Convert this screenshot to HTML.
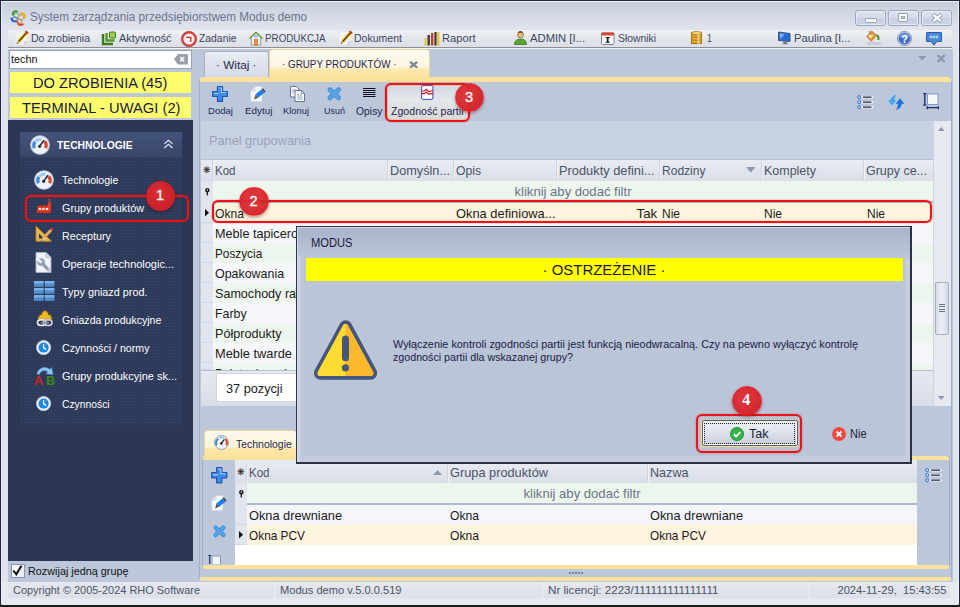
<!DOCTYPE html>
<html lang="pl"><head><meta charset="utf-8"><title>System zarządzania przedsiębiorstwem Modus demo</title>
<style>
html,body{margin:0;padding:0;}
body{width:960px;height:607px;overflow:hidden;position:relative;font-family:"Liberation Sans", sans-serif;background:#cdd4e2;}
div,span,svg{position:absolute;box-sizing:border-box;}
.t{white-space:nowrap;}
svg{overflow:visible;}
</style></head>
<body>
<div style="left:0px;top:0px;width:960px;height:607px;background:linear-gradient(#c6cddc 0,#dfe3ec 28px,#dfe3ec 100%);"></div>
<div style="left:0px;top:0px;width:960px;height:1px;background:#1f2942;"></div>
<div style="left:0px;top:1px;width:960px;height:1px;background:#eef1f6;"></div>
<div style="left:0px;top:0px;width:1px;height:607px;background:#1f2942;"></div>
<div style="left:1px;top:604px;width:958px;height:1px;background:#8a90a0;"></div>
<div style="left:1px;top:1px;width:1px;height:603px;background:#e8ecf3;"></div>
<div style="left:959px;top:0px;width:1px;height:607px;background:#1f2942;"></div>
<div style="left:958px;top:1px;width:1px;height:603px;background:#eef1f6;"></div>
<div style="left:0px;top:605px;width:960px;height:2px;background:#1c1c1c;"></div>
<svg style="left:10px;top:10px;" width="17" height="17" viewBox="0 0 17 17">
<path d="M7 1.5c-2.5-.8-4.5 1-4.2 3.2" fill="none" stroke="#2f9a2f" stroke-width="2" stroke-linecap="round"/>
<path d="M11 3.5c2.6-.4 4.5 1.5 3.8 4" fill="none" stroke="#e8b010" stroke-width="2" stroke-linecap="round"/>
<path d="M1.5 8.5c.3 2.6 2.8 3.6 4.8 2.4" fill="none" stroke="#1f4fc0" stroke-width="2" stroke-linecap="round"/>
<path d="M7.5 12c.5 3 3.5 3.8 5.3 2.2" fill="none" stroke="#d84a18" stroke-width="2" stroke-linecap="round"/>
<circle cx="6.5" cy="5.5" r="2.6" fill="none" stroke="#6aa06a" stroke-width="1"/>
<circle cx="11" cy="7.5" r="2.6" fill="none" stroke="#c9a25a" stroke-width="1"/>
<circle cx="9.2" cy="11.5" r="2.6" fill="none" stroke="#c97a5a" stroke-width="1"/>
<circle cx="5" cy="9" r="2.2" fill="none" stroke="#5a80b8" stroke-width="1"/>
</svg>
<span id="t0" class="t" style="top:8.6px;font-size:12px;line-height:16px;color:#69748e;left:29.8px;transform-origin:0 50%;transform:scaleX(0.9749);">System zarządzania przedsiębiorstwem Modus demo</span>
<div style="left:855px;top:10px;width:30.5px;height:16px;border:1px solid #9ba7c0;border-radius:3px;background:linear-gradient(#dde3ee,#d3dbe9 50%,#c6d0e2 52%,#ccd5e5);box-shadow:inset 0 0 0 1px rgba(255,255,255,.5);"><div style="left:9px;top:7px;width:11.500px;height:4.500px;background:#fff;border:1px solid #98a2b6;border-radius:1.500px;"></div></div>
<div style="left:888.3px;top:10px;width:30.5px;height:16px;border:1px solid #9ba7c0;border-radius:3px;background:linear-gradient(#dde3ee,#d3dbe9 50%,#c6d0e2 52%,#ccd5e5);box-shadow:inset 0 0 0 1px rgba(255,255,255,.5);"><div style="left:9px;top:2px;width:10px;height:9px;background:#fff;border:1px solid #98a2b6;border-radius:1px;"></div><div style="left:12px;top:5px;width:4px;height:3px;background:#c5ccdb;border:1px solid #98a2b6;"></div></div>
<div style="left:921.3px;top:10px;width:30.5px;height:16px;border:1px solid #9ba7c0;border-radius:3px;background:linear-gradient(#dde3ee,#d3dbe9 50%,#c6d0e2 52%,#ccd5e5);box-shadow:inset 0 0 0 1px rgba(255,255,255,.5);"><svg style="left:8.500px;top:1.800px" width="12" height="10" viewBox="0 0 12 10"><path d="M1.800 1.500l8.600 7M10.400 1.500l-8.600 7" stroke="#8e99b0" stroke-width="3.800"/><path d="M2.300 1.900l7.600 6.200M9.900 1.900l-7.600 6.200" stroke="#fff" stroke-width="2.300"/></svg></div>
<div style="left:8px;top:30px;width:944px;height:17px;background:linear-gradient(#eceef3,#dfe2ea);"></div>
<div style="left:8px;top:30px;width:86px;height:17px;background:linear-gradient(#f0f1f5,#e1e4eb 60%,#dcdfe8);"></div>
<div style="left:95px;top:30px;width:82px;height:17px;background:linear-gradient(#f0f1f5,#e1e4eb 60%,#dcdfe8);"></div>
<div style="left:178px;top:30px;width:65px;height:17px;background:linear-gradient(#f0f1f5,#e1e4eb 60%,#dcdfe8);"></div>
<div style="left:244px;top:30px;width:87px;height:17px;background:linear-gradient(#f0f1f5,#e1e4eb 60%,#dcdfe8);"></div>
<div style="left:332px;top:30px;width:83px;height:17px;background:linear-gradient(#f0f1f5,#e1e4eb 60%,#dcdfe8);"></div>
<div style="left:416px;top:30px;width:90px;height:17px;background:linear-gradient(#f0f1f5,#e1e4eb 60%,#dcdfe8);"></div>
<div style="left:507px;top:30px;width:86px;height:17px;background:linear-gradient(#f0f1f5,#e1e4eb 60%,#dcdfe8);"></div>
<div style="left:594px;top:30px;width:88px;height:17px;background:linear-gradient(#f0f1f5,#e1e4eb 60%,#dcdfe8);"></div>
<div style="left:683px;top:30px;width:87px;height:17px;background:linear-gradient(#f0f1f5,#e1e4eb 60%,#dcdfe8);"></div>
<div style="left:771px;top:30px;width:88px;height:17px;background:linear-gradient(#f0f1f5,#e1e4eb 60%,#dcdfe8);"></div>
<div style="left:860px;top:30px;width:30px;height:17px;background:linear-gradient(#f0f1f5,#e1e4eb 60%,#dcdfe8);"></div>
<div style="left:891px;top:30px;width:29px;height:17px;background:linear-gradient(#f0f1f5,#e1e4eb 60%,#dcdfe8);"></div>
<div style="left:921px;top:30px;width:30px;height:17px;background:linear-gradient(#f0f1f5,#e1e4eb 60%,#dcdfe8);"></div>
<div style="left:8px;top:47px;width:944px;height:1px;background:#8e8e90;"></div>
<div style="left:8px;top:48px;width:944px;height:1px;background:#f4f5f8;"></div>
<svg style="left:14px;top:30px;" width="16" height="16" viewBox="0 0 16 16"><path d="M.8 1h13v10.500l-3.800 3.700h-9.200z" fill="#f2f3f5" stroke="#d3d6dd" stroke-width=".6"/><path d="M13.800 11.500h-3.800v3.700z" fill="#dadde4" stroke="#c2c6cf" stroke-width=".5"/><path d="M4.600 11.600l8-9" stroke="#f2c21a" stroke-width="3.500"/><path d="M4.600 11.600l8-9" stroke="#2a2618" stroke-width="1.100"/><path d="M12.300 2.950l1.100-1.250" stroke="#d8201c" stroke-width="3.500"/><path d="M3.300 10.400l2.600 2.300-3.300 1.200z" fill="#d9b36a"/><path d="M2.600 13.900l.4-1.300 1 .9z" fill="#2a2618"/></svg>
<span id="t1" class="t" style="top:31.4px;font-size:11px;line-height:15px;color:#3b4761;left:30.5px;transform-origin:0 50%;transform:scaleX(0.9552);">Do zrobienia</span>
<svg style="left:102px;top:31px;" width="14" height="15" viewBox="0 0 14 15"><path d="M1 3v10h10" fill="none" stroke="#3c7a1c" stroke-width="2.4"/><path d="M4.5 2v7.5h8" fill="none" stroke="#4f9a24" stroke-width="2.4"/><rect x="7.5" y="1" width="6" height="6" rx="1" fill="#9ad04a" stroke="#3c7a1c" stroke-width="1"/></svg>
<span id="t2" class="t" style="top:31.4px;font-size:11px;line-height:15px;color:#3b4761;left:118.5px;transform-origin:0 50%;transform:scaleX(0.9985);">Aktywność</span>
<svg style="left:180.5px;top:30.5px;" width="16" height="16" viewBox="0 0 16 16"><circle cx="8" cy="8" r="6.700" fill="#fbeeee" stroke="#d2433a" stroke-width="2.200"/><circle cx="8" cy="8" r="7.700" fill="none" stroke="#a83028" stroke-width=".5"/><path d="M5.200 6.300h4.600v4.600" fill="none" stroke="#c0352c" stroke-width="1.300"/></svg>
<span id="t3" class="t" style="top:31.4px;font-size:11px;line-height:15px;color:#3b4761;left:198.5px;transform-origin:0 50%;transform:scaleX(0.9430);">Zadanie</span>
<svg style="left:249px;top:30.5px;" width="14" height="15" viewBox="0 0 14 15"><path d="M2.400 7v7.200h9.200v-7.200" fill="#f6f5f0" stroke="#8a8f98" stroke-width=".9"/><path d="M.6 7.600l6.400-6.400 6.400 6.400" fill="#f6f5f0" stroke="#5f9a48" stroke-width="1.500" stroke-linejoin="round"/><rect x="5.300" y="8.500" width="3.400" height="5.600" fill="#e89a3c" stroke="#a8641c" stroke-width=".6"/><rect x="5.800" y="4.600" width="2.400" height="2" fill="#a8c8e8" stroke="#6a8aa8" stroke-width=".4"/></svg>
<span id="t4" class="t" style="top:31.4px;font-size:11px;line-height:15px;color:#3b4761;left:265px;transform-origin:0 50%;transform:scaleX(0.8918);">PRODUKCJA</span>
<svg style="left:337.5px;top:30px;" width="16" height="16" viewBox="0 0 16 16"><path d="M.8 1h13v10.500l-3.800 3.700h-9.200z" fill="#f2f3f5" stroke="#d3d6dd" stroke-width=".6"/><path d="M13.800 11.500h-3.800v3.700z" fill="#dadde4" stroke="#c2c6cf" stroke-width=".5"/><path d="M4.600 11.600l8-9" stroke="#f2c21a" stroke-width="3.500"/><path d="M4.600 11.600l8-9" stroke="#2a2618" stroke-width="1.100"/><path d="M12.300 2.950l1.100-1.250" stroke="#d8201c" stroke-width="3.500"/><path d="M3.300 10.400l2.600 2.300-3.300 1.200z" fill="#d9b36a"/><path d="M2.600 13.900l.4-1.300 1 .9z" fill="#2a2618"/></svg>
<span id="t5" class="t" style="top:31.4px;font-size:11px;line-height:15px;color:#3b4761;left:353.5px;transform-origin:0 50%;transform:scaleX(0.9573);">Dokument</span>
<svg style="left:424px;top:31px;" width="16" height="15" viewBox="0 0 16 15"><rect x="0.5" y="7" width="2" height="7.5" fill="#e6c61c"/><rect x="3.5" y="4" width="2.4" height="10.5" fill="#3a3a3a"/><rect x="7" y="2" width="2.4" height="12.5" fill="#c83a2a"/><rect x="10.4" y="1" width="2.2" height="13.5" fill="#3a3a3a"/><rect x="13.2" y="1" width="2.2" height="13.5" fill="#f0c21c"/></svg>
<span id="t6" class="t" style="top:31.4px;font-size:11px;line-height:15px;color:#3b4761;left:441.5px;transform-origin:0 50%;transform:scaleX(1.0142);">Raport</span>
<svg style="left:513.5px;top:31px;" width="13" height="14" viewBox="0 0 13 14"><circle cx="6.5" cy="3.8" r="3" fill="#e8b878" stroke="#9a6a30" stroke-width=".8"/><path d="M0.5 13.5c0-4 2.5-5.5 6-5.5s6 1.500 6 5.5z" fill="#5aa832" stroke="#3a7a1c" stroke-width=".8"/><path d="M4.5 1.800c1-1.500 3-1.500 4 0" stroke="#6a4a20" stroke-width="1.4" fill="none"/></svg>
<span id="t7" class="t" style="top:31.4px;font-size:11px;line-height:15px;color:#3b4761;left:530px;transform-origin:0 50%;transform:scaleX(1.0227);">ADMIN [I...</span>
<svg style="left:601px;top:31.5px;" width="13.5" height="13" viewBox="0 0 13.5 13"><rect x=".5" y="1" width="12.5" height="11.5" rx="1" fill="#fff" stroke="#7a86a0" stroke-width="1"/><rect x=".5" y=".5" width="12.5" height="3" fill="#d8442c"/><rect x="5.8" y="5" width="1.800" height="5.5" fill="#222"/><rect x="4.600" y="5" width="4.200" height="1" fill="#222"/><rect x="4.600" y="9.8" width="4.200" height="1" fill="#222"/></svg>
<span id="t8" class="t" style="top:31.4px;font-size:11px;line-height:15px;color:#3b4761;left:617.5px;transform-origin:0 50%;transform:scaleX(0.9415);">Słowniki</span>
<svg style="left:690.5px;top:31px;" width="11" height="14" viewBox="0 0 11 14"><rect x=".5" y="1.500" width="10" height="11" fill="#e8a82c" stroke="#9a6a10" stroke-width=".8"/><ellipse cx="5.5" cy="2" rx="5" ry="1.500" fill="#f8d878" stroke="#9a6a10" stroke-width=".7"/><path d="M.5 5.200c2 1.400 8 1.400 10 0M.5 8.400c2 1.400 8 1.400 10 0M.5 11.600c2 1.400 8 1.400 10 0" fill="none" stroke="#9a6a10" stroke-width=".7"/><rect x="6.500" y="3" width="2" height="10" fill="#fbe6a8" opacity=".7"/></svg>
<span id="t9" class="t" style="top:31.4px;font-size:11px;line-height:15px;color:#3b4761;left:706.5px;transform-origin:0 50%;transform:scaleX(0.8163);">1</span>
<svg style="left:778px;top:31px;" width="13" height="14" viewBox="0 0 13 14"><path d="M.5 1l11.500 1.500v8l-11.500-1z" fill="#2a6ad8" stroke="#3a4a6a" stroke-width=".9"/><path d="M1.500 2.200l5 .7-4 5.600z" fill="#7ab0f0"/><path d="M5 10.500l4 .4v1.500l2 .8h-7l1.500-1z" fill="#6a7488"/></svg>
<span id="t10" class="t" style="top:31.4px;font-size:11px;line-height:15px;color:#3b4761;left:793.5px;transform-origin:0 50%;transform:scaleX(1.0264);">Paulina [I...</span>
<svg style="left:866px;top:30px;" width="16" height="16" viewBox="0 0 16 16"><path d="M5.600 .9l5 4.700-5.300 5.600-4.500-4.600z" fill="#e8902c" stroke="#c0661c" stroke-width=".8" stroke-linejoin="round"/><path d="M5.400 2.600l2.600 2.500-3.300 3.500-2.300-2.400z" fill="#fbe08a"/><path d="M3.600 5.200l1.700 1.700-.9 1-1.500-1.600z" fill="#fff"/><path d="M2.700 1.200l4 4" stroke="#a8481c" stroke-width="1"/><path d="M9.800 4.700c2.600-.7 4.200 1.400 3.700 5-.8.600-1.600.5-2.100 0 .3-2.100-.3-3.600-1.600-5z" fill="#3f9a1c"/><rect x="1.100" y="12.200" width="13.700" height="2.500" fill="#c6cad4"/></svg>
<svg style="left:897px;top:31px;" width="15" height="15" viewBox="0 0 15 15"><circle cx="7.500" cy="7.500" r="7.100" fill="#f2f5fb" stroke="#5a6a98" stroke-width=".7"/><circle cx="7.500" cy="7.500" r="5.700" fill="#3f6fd4" stroke="#2a4fa8" stroke-width=".6"/><path d="M2.500 6a5.200 5.200 0 0 1 10 0c-3 1.500-7 1.500-10 0z" fill="#7a9fe8" opacity=".7"/><text x="7.500" y="11.600" font-size="11" font-weight="bold" fill="#fff" text-anchor="middle" font-family="Liberation Sans, sans-serif">?</text></svg>
<svg style="left:925.5px;top:32px;" width="16" height="14" viewBox="0 0 16 14"><path d="M1 .5h14a.5.5 0 0 1 .5.5v8a.5.5 0 0 1-.5.5h-4l-3 3.500-3-3.500h-4a.5.5 0 0 1-.5-.5v-8a.5.5 0 0 1 .5-.5z" fill="#4a8ad8" stroke="#2a5aa8" stroke-width="1"/><circle cx="5" cy="5" r="1" fill="none" stroke="#fff" stroke-width=".7"/><circle cx="8" cy="5" r="1" fill="none" stroke="#fff" stroke-width=".7"/><circle cx="11" cy="5" r="1" fill="none" stroke="#fff" stroke-width=".7"/></svg>
<div style="left:8px;top:49px;width:192px;height:533px;background:#bcc7da;"></div>
<div style="left:9px;top:50px;width:182.5px;height:18.5px;background:#fff;border:1px solid #98a3b8;"></div>
<span id="t11" class="t" style="top:51.7px;font-size:11px;line-height:15px;color:#111;left:11px;transform-origin:0 50%;transform:scaleX(0.9843);">techn</span>
<svg style="left:173.5px;top:53.8px;" width="14" height="10.5" viewBox="0 0 14 10.5"><path d="M4 0h8.500a1.500 1.500 0 0 1 1.500 1.500v7.500a1.500 1.500 0 0 1-1.500 1.500h-8.500l-4-5.250z" fill="#9a9ea8"/><path d="M6.200 3l4 4.500M10.200 3l-4 4.500" stroke="#fff" stroke-width="1.500"/></svg>
<div style="left:9.5px;top:71.5px;width:181.5px;height:21.5px;background:#ffff6e;"></div>
<span id="t12" class="t" style="top:73.9px;font-size:14.8px;line-height:18.8px;color:#1a1a40;left:33.4px;transform-origin:0 50%;transform:scaleX(0.9899);">DO ZROBIENIA (45)</span>
<div style="left:9.5px;top:97px;width:181.5px;height:21px;background:#ffff6e;"></div>
<span id="t13" class="t" style="top:98.8px;font-size:14.8px;line-height:18.8px;color:#1a1a40;left:22px;transform-origin:0 50%;transform:scaleX(0.9955);">TERMINAL - UWAGI (2)</span>
<div style="left:8px;top:120px;width:185px;height:440.5px;background:#2b3755;"></div>
<div style="left:20px;top:157px;width:162px;height:268px;background-color:#2d3a59;background-image:radial-gradient(#384667 0.6px,transparent 0.9px);background-size:3px 3px;"></div>
<div style="left:20px;top:132px;width:162px;height:25px;background:linear-gradient(#43537b,#394768);"></div>
<svg style="left:30px;top:134.5px;" width="20" height="20" viewBox="0 0 20 20"><circle cx="10" cy="10" r="9.300" fill="#eef2f8" stroke="#c0cbdc" stroke-width="1.100"/>
<path d="M4.380 13.120A6.200 6.200 0 0 1 4.920 6.940" fill="none" stroke="#3d86d8" stroke-width="3.200"/>
<path d="M5.390 6.350A6.200 6.200 0 0 1 11.600 4.510" fill="none" stroke="#9cc8f2" stroke-width="3.200"/>
<path d="M14.610 6.350A6.200 6.200 0 0 1 15.620 13.120" fill="none" stroke="#d8442c" stroke-width="3.200"/>
<path d="M9.600 11.300l4.200-5.800" stroke="#2a2a3a" stroke-width="1.500" stroke-linecap="round"/><circle cx="9.600" cy="11.300" r="1.600" fill="#2a2a3a"/></svg>
<span id="t14" class="t" style="top:137.5px;font-size:11px;line-height:15px;color:#fff;font-weight:bold;left:56.5px;transform-origin:0 50%;transform:scaleX(0.9359);">TECHNOLOGIE</span>
<svg style="left:163.3px;top:139px;" width="10.8" height="9.8" viewBox="0 0 12 12"><path d="M1 6l5-4.500 5 4.500M1 11l5-4.500 5 4.500" fill="none" stroke="#dfe6f2" stroke-width="1.500"/></svg>
<span id="t15" class="t" style="top:173.3px;font-size:11px;line-height:15px;color:#fff;left:62px;transform-origin:0 50%;transform:scaleX(0.9588);">Technologie</span>
<span id="t16" class="t" style="top:201.3px;font-size:11px;line-height:15px;color:#fff;left:62px;transform-origin:0 50%;transform:scaleX(0.9789);">Grupy produktów</span>
<span id="t17" class="t" style="top:229.3px;font-size:11px;line-height:15px;color:#fff;left:62px;transform-origin:0 50%;transform:scaleX(0.9773);">Receptury</span>
<span id="t18" class="t" style="top:257.3px;font-size:11px;line-height:15px;color:#fff;left:62px;transform-origin:0 50%;transform:scaleX(0.9954);">Operacje technologic...</span>
<span id="t19" class="t" style="top:285.3px;font-size:11px;line-height:15px;color:#fff;left:62px;transform-origin:0 50%;transform:scaleX(0.9845);">Typy gniazd prod.</span>
<span id="t20" class="t" style="top:313.3px;font-size:11px;line-height:15px;color:#fff;left:62px;transform-origin:0 50%;transform:scaleX(0.9618);">Gniazda produkcyjne</span>
<span id="t21" class="t" style="top:341.3px;font-size:11px;line-height:15px;color:#fff;left:62px;transform-origin:0 50%;transform:scaleX(0.9670);">Czynności / normy</span>
<span id="t22" class="t" style="top:369.3px;font-size:11px;line-height:15px;color:#fff;left:62px;transform-origin:0 50%;transform:scaleX(0.9951);">Grupy produkcyjne sk...</span>
<span id="t23" class="t" style="top:397.3px;font-size:11px;line-height:15px;color:#fff;left:62px;transform-origin:0 50%;transform:scaleX(0.9379);">Czynności</span>
<svg style="left:33.5px;top:170px;" width="20" height="20" viewBox="0 0 20 20"><circle cx="10" cy="10" r="9.300" fill="#eef2f8" stroke="#c0cbdc" stroke-width="1.100"/>
<path d="M4.380 13.120A6.200 6.200 0 0 1 4.920 6.940" fill="none" stroke="#3d86d8" stroke-width="3.200"/>
<path d="M5.390 6.350A6.200 6.200 0 0 1 11.600 4.510" fill="none" stroke="#9cc8f2" stroke-width="3.200"/>
<path d="M14.610 6.350A6.200 6.200 0 0 1 15.620 13.120" fill="none" stroke="#d8442c" stroke-width="3.200"/>
<path d="M9.600 11.300l4.200-5.800" stroke="#2a2a3a" stroke-width="1.500" stroke-linecap="round"/><circle cx="9.600" cy="11.300" r="1.600" fill="#2a2a3a"/></svg>
<svg style="left:36px;top:199.3px;" width="16" height="14.2" viewBox="0 0 16.500 16"><path d="M.5 15.500v-6.500l4.300-2.600v2.600l4.300-2.600v2.600l3.600-2.200v-3.300h3.300v12z" fill="#e2412a" stroke="#b82a18" stroke-width=".6"/><rect x="2.300" y="10.200" width="2.600" height="2" fill="#fff"/><rect x="6.300" y="10.200" width="2.600" height="2" fill="#fff"/><rect x="10.300" y="10.200" width="2.600" height="2" fill="#fff"/><rect x="13.400" y="0" width="2" height="1.400" fill="#e2412a"/><rect x="13.400" y="2.100" width="2" height=".9" fill="#e2412a"/><rect x="0" y="13.800" width="16.500" height="2" fill="#c8301c"/></svg>
<svg style="left:34px;top:224.5px;" width="20" height="20" viewBox="0 0 20 20"><path d="M2 1.200v15h15.500z" fill="#e8b84a" stroke="#b8862a" stroke-width="1"/><path d="M5 8.500v5h5z" fill="#2c3857"/><path d="M17.200 5l-8 8.200" stroke="#e8a85a" stroke-width="3"/><path d="M17.200 5l1.300-1.400" stroke="#d83a30" stroke-width="3"/><path d="M10.200 12.100l-3.400 4 4.600-2.600z" fill="#f0d8b0"/><path d="M6.800 16.100l1.300-1.600.8.700z" fill="#3a5ab8"/></svg>
<svg style="left:35px;top:252px;" width="18" height="21" viewBox="0 0 18 21"><path d="M1 .5h10l5 5v15h-15z" fill="#eef1f6" stroke="#a8b2c4" stroke-width=".9"/><path d="M11 .5v5h5" fill="#d5dbe6" stroke="#a8b2c4" stroke-width=".7"/><path d="M7.500 11.500l6 6.500" stroke="#8e9ab2" stroke-width="3" stroke-linecap="round"/><circle cx="6" cy="10" r="2.700" fill="none" stroke="#8e9ab2" stroke-width="2.200"/><path d="M6 10l-4.500-3.500" stroke="#eef1f6" stroke-width="2.600"/><path d="M13 17.500l.5.500" stroke="#dfe4ee" stroke-width="1.200" stroke-linecap="round"/></svg>
<svg style="left:33.8px;top:280.8px;" width="20.4" height="19.8" viewBox="0 0 20.4 19.8"><rect x="0" y="0" width="9.600" height="5.800" fill="#4f8fd0"/><rect x="0" y="0" width="9.600" height="2.400" fill="#7ab2e6"/><rect x="10.8" y="0" width="9.600" height="5.800" fill="#4f8fd0"/><rect x="10.8" y="0" width="9.600" height="2.400" fill="#7ab2e6"/><rect x="0" y="7" width="9.600" height="5.800" fill="#4f8fd0"/><rect x="0" y="7" width="9.600" height="2.400" fill="#7ab2e6"/><rect x="10.8" y="7" width="9.600" height="5.800" fill="#4f8fd0"/><rect x="10.8" y="7" width="9.600" height="2.400" fill="#7ab2e6"/><rect x="0" y="14" width="9.600" height="5.800" fill="#4f8fd0"/><rect x="0" y="14" width="9.600" height="2.400" fill="#7ab2e6"/><rect x="10.8" y="14" width="9.600" height="5.800" fill="#4f8fd0"/><rect x="10.8" y="14" width="9.600" height="2.400" fill="#7ab2e6"/></svg>
<svg style="left:35.5px;top:309.5px;" width="18" height="18" viewBox="0 0 18 18"><path d="M6 2.200h1.700v-1.200h2.600v1.200h1.700v2.800h2.600v2.200h1.200v2h-13.600v-2h1.200v-2.200h2.600z" fill="#f2b92a" stroke="#b8841a" stroke-width=".7"/><rect x="1.500" y="9.800" width="8.500" height="5.600" rx="2.800" fill="none" stroke="#e6e8ec" stroke-width="1.700"/><rect x="7.500" y="9.800" width="8.500" height="5.600" rx="2.800" fill="none" stroke="#c9ccd2" stroke-width="1.700"/><path d="M5 12.600h8" stroke="#8a8e98" stroke-width="1.600"/></svg>
<svg style="left:36.2px;top:339.5px;" width="15.2" height="15.2" viewBox="0 0 17 17"><circle cx="8.500" cy="8.500" r="8" fill="#eceff4" stroke="#b4bed0" stroke-width="1"/><circle cx="8.500" cy="8.500" r="5.600" fill="#1c86e0"/><path d="M8.500 5v3.800l2.400 1.400" fill="none" stroke="#fff" stroke-width="1.400" stroke-linecap="round"/></svg>
<svg style="left:33.5px;top:364px;" width="21" height="22" viewBox="0 0 21 22"><path d="M3 10c1-6 8-8.500 13-4.500l1.500-2 1.500 7-7-.8 1.800-1.800c-3.500-2.600-7.500-1-8.300 2.600z" fill="#8cc8f4" stroke="#5a9ad8" stroke-width=".6"/><text x="0" y="21" font-size="12.500" font-weight="bold" fill="#cc2420" font-family="Liberation Sans, sans-serif">A</text><text x="12" y="21" font-size="12.500" font-weight="bold" fill="#3a8a14" font-family="Liberation Sans, sans-serif">B</text></svg>
<svg style="left:36.2px;top:395.5px;" width="15.2" height="15.2" viewBox="0 0 17 17"><circle cx="8.500" cy="8.500" r="8" fill="#eceff4" stroke="#b4bed0" stroke-width="1"/><circle cx="8.500" cy="8.500" r="5.600" fill="#1c86e0"/><path d="M8.500 5v3.800l2.400 1.400" fill="none" stroke="#fff" stroke-width="1.400" stroke-linecap="round"/></svg>
<div style="left:10.5px;top:563.5px;width:14px;height:14px;background:linear-gradient(135deg,#fff,#e4e8f0);border:1px solid #8a94a8;"></div>
<svg style="left:12px;top:565px;" width="11" height="11" viewBox="0 0 11 11"><path d="M1.300 5.500l3 3.800 5.200-8.600" fill="none" stroke="#0a0a0a" stroke-width="2"/></svg>
<span id="t24" class="t" style="top:563.5px;font-size:11px;line-height:15px;color:#111;left:27.5px;transform-origin:0 50%;transform:scaleX(0.9841);">Rozwijaj jedną grupę</span>
<div style="left:195px;top:308px;width:2px;height:2px;background:#6a7898;"></div>
<div style="left:195px;top:312px;width:2px;height:2px;background:#6a7898;"></div>
<div style="left:195px;top:316px;width:2px;height:2px;background:#6a7898;"></div>
<div style="left:195px;top:320px;width:2px;height:2px;background:#6a7898;"></div>
<div style="left:194px;top:49px;width:758.5px;height:533px;background:#bcc7da;"></div>
<div style="left:203.5px;top:51px;width:65px;height:27px;background:linear-gradient(#e9ecf3,#d3d9e6);border:1px solid #a7b1c5;border-bottom:none;border-radius:3px 3px 0 0;"></div>
<span id="t25" class="t" style="top:57.5px;font-size:10.6px;line-height:14.6px;color:#1f2750;left:215.8px;transform-origin:0 50%;transform:scaleX(1.1101);">· Witaj ·</span>
<div style="left:199px;top:77px;width:752.5px;height:504px;background:#bcc7da;border:1px solid #a3aec3;border-top:5px solid #fbe29c;border-bottom:4px solid #fbe29c;border-radius:5px 5px 4px 4px;"></div>
<div style="left:268.5px;top:49px;width:161px;height:29.5px;background:linear-gradient(#fefbf2,#fdf5de 58%,#fbe8ae 68%,#fbe29c);border:1px solid #e9d6a0;border-bottom:none;border-radius:4px 4px 0 0;"></div>
<span id="t26" class="t" style="top:57.3px;font-size:10.6px;line-height:14.6px;color:#1f2750;left:281.5px;transform-origin:0 50%;transform:scaleX(0.9278);">· GRUPY PRODUKTÓW ·</span>
<svg style="left:409px;top:60.8px;" width="9.5" height="7.4" viewBox="0 0 9.5 7.4"><path d="M1.200 .8l7 5.800M8.200 .8l-7 5.800" stroke="#7d8494" stroke-width="2.200"/></svg>
<svg style="left:917.5px;top:56px;" width="9" height="5" viewBox="0 0 9 5"><path d="M0 0h8.500l-4.250 4.500z" fill="#8c98b0"/></svg>
<svg style="left:936px;top:54px;" width="10" height="9" viewBox="0 0 10 9"><path d="M1.500 1.200l7 6.600M8.500 1.200l-7 6.600" stroke="#8c98b0" stroke-width="2.300"/></svg>
<svg style="left:212px;top:86px;" width="16" height="16" viewBox="0 0 16 16"><path d="M5.500 .7h5v4.800h4.800v5h-4.800v4.800h-5v-4.800h-4.800v-5h4.800z" fill="#3f8ae8" stroke="#1d56b0" stroke-width="1.200" stroke-linejoin="round"/><path d="M6.500 2h3v4.500h4.500M2 7.500h4.500" fill="none" stroke="#9cc8fa" stroke-width="1.200"/></svg>
<span id="t27" class="t" style="top:104.2px;font-size:9.8px;line-height:13.8px;color:#1f2750;left:207.5px;transform-origin:0 50%;transform:scaleX(0.9762);">Dodaj</span>
<svg style="left:250px;top:86px;" width="16" height="16" viewBox="0 0 16 16"><path d="M5.200 .6h6.200a.6.6 0 0 1 .6.6v13.600a.6.6 0 0 1-.6.6h-10a.6.6 0 0 1-.6-.6v-9.600z" fill="#fcfcfd" stroke="#c9ced8" stroke-width=".6"/><path d="M5.200 .6v3.600a1 1 0 0 1-1 1h-3.400z" fill="#e4e7ed" stroke="#c0c5d0" stroke-width=".5"/><path d="M6.800 10l6.200-5" stroke="#1a80ea" stroke-width="4.300"/><path d="M13 5l1.300-1.050" stroke="#4a4a4e" stroke-width="4.300"/><path d="M5.500 8.300l2.700 3.400-4.100 1.700z" fill="#55575c"/></svg>
<span id="t28" class="t" style="top:104.2px;font-size:9.8px;line-height:13.8px;color:#1f2750;left:244.5px;transform-origin:0 50%;transform:scaleX(1.0098);">Edytuj</span>
<svg style="left:289.5px;top:85.5px;" width="15" height="16" viewBox="0 0 15 16"><path d="M.5 .5h6l2.500 2.500v8h-8.500z" fill="#f4f6fa" stroke="#5a6a8a" stroke-width=".9"/><path d="M2 4h4M2 6h3" stroke="#8a9ab8" stroke-width=".8"/><path d="M5 4.500h6.500l3 3v8h-9.500z" fill="#fdfdfe" stroke="#5a6a8a" stroke-width=".9"/><path d="M11.500 4.500v3h3" fill="none" stroke="#5a6a8a" stroke-width=".7"/><path d="M7 9h5.500M7 11h5.500M7 13h5.500" stroke="#7a9ac8" stroke-width=".9"/></svg>
<span id="t29" class="t" style="top:104.2px;font-size:9.8px;line-height:13.8px;color:#1f2750;left:283px;transform-origin:0 50%;transform:scaleX(0.9547);">Klonuj</span>
<svg style="left:326.75px;top:87.25px;" width="14.5" height="13.5" viewBox="0 0 14.5 13.5"><path d="M3 2.800l8.500 8M11.500 2.800l-8.500 8" stroke="#3f8fd6" stroke-width="5" stroke-linecap="round"/><path d="M3 2.800l8.500 8M11.500 2.800l-8.500 8" stroke="#55a4e6" stroke-width="3" stroke-linecap="round"/></svg>
<span id="t30" class="t" style="top:104.2px;font-size:9.8px;line-height:13.8px;color:#1f2750;left:323.5px;transform-origin:0 50%;transform:scaleX(0.9180);">Usuń</span>
<svg style="left:362.5px;top:88px;" width="12.5" height="10" viewBox="0 0 12.5 10"><path d="M0 .5h12.500M0 2.500h12.500M0 4.500h12.500M0 6.500h12.500M0 8.500h12.500" stroke="#0c0c1c" stroke-width="1"/></svg>
<span id="t31" class="t" style="top:103.5px;font-size:11px;line-height:15px;color:#1f2750;left:355.5px;transform-origin:0 50%;transform:scaleX(0.9422);">Opisy</span>
<div style="left:386.5px;top:84.5px;width:82px;height:36.5px;background:linear-gradient(#d3d9e3,#e3e6eb 40%,#dadad6 100%);border:1px solid #d9d2b8;border-radius:3px;"></div>
<svg style="left:421px;top:85px;" width="12.5" height="15" viewBox="0 0 12.5 15"><rect x=".6" y=".6" width="11.300" height="13.800" rx="1.200" fill="#fdfdfe" stroke="#3450b8" stroke-width="1"/><path d="M.3 6h3.200l1.800-1.700 2.600 2.600 1.300-.9h3" fill="none" stroke="#d8141c" stroke-width="1.100"/><path d="M.3 8.600h3.200l1.800-1.700 2.600 2.600 1.300-.9h3" fill="none" stroke="#d8141c" stroke-width="1.100"/></svg>
<span id="t32" class="t" style="top:103.5px;font-size:11px;line-height:15px;color:#1f2750;left:390.5px;transform-origin:0 50%;transform:scaleX(0.9639);">Zgodność partii</span>
<svg style="left:857px;top:94.9px;" width="15" height="14.5" viewBox="0 0 15 14.5"><circle cx="2.200" cy="2.200" r="1.600" fill="#b4d6f6" stroke="#2a6ad0" stroke-width=".9"/><circle cx="2.200" cy="7.200" r="1.600" fill="#b4d6f6" stroke="#2a6ad0" stroke-width=".9"/><circle cx="2.200" cy="12.200" r="1.600" fill="#b4d6f6" stroke="#2a6ad0" stroke-width=".9"/><path d="M5.500 2.200h9.500M5.500 7.200h9.500M5.500 12.200h9.500" stroke="#eef2f8" stroke-width="2.600" stroke-linecap="round"/><path d="M6 2.200h8.500M6 7.200h8.500M6 12.200h8.500" stroke="#2a2a34" stroke-width="1.250"/></svg>
<svg style="left:888px;top:93.5px;" width="17" height="16.5" viewBox="0 0 17 16.5"><path d="M8.400 .4C4.200 1.800 2.600 4.200 2.500 6.200H0l4.200 5.200 4.200-5.200H6.300c.1-2 .7-4 2.100-5.800z" fill="#45a4f4"/><path d="M7.800 16.200C12 14.800 13.600 12.200 13.700 9.800h2.700l-4.400-5.600-4.400 5.600h2.300c-.1 2.400-.7 4.600-2.100 6.400z" fill="#1a74da"/></svg>
<svg style="left:923px;top:92.5px;" width="16" height="17" viewBox="0 0 16 17"><path d="M.3 .6h3M1.800 .6v11.500M.3 12.100h3" stroke="#1c2a5a" stroke-width="1.300" fill="none"/><rect x="4.500" y="1" width="10.500" height="10.500" fill="#f4f7fc" stroke="#7a9ad8" stroke-width="1"/><path d="M4.300 13.200v3M15.300 13.200v3M4.300 14.700h11" stroke="#1c2a5a" stroke-width="1.300" fill="none"/></svg>
<div style="left:201px;top:121px;width:732px;height:37.5px;background:#c9d2e3;"></div>
<span id="t33" class="t" style="top:131.5px;font-size:13px;line-height:17px;color:#97a3ba;left:209px;transform-origin:0 50%;transform:scaleX(0.9800);">Panel grupowania</span>
<div style="left:201px;top:158.5px;width:732px;height:22px;background:linear-gradient(#e9ecf2,#d9dee8);border-top:1px solid #b9c2d4;"></div>
<span id="t34" class="t" style="top:161.5px;font-size:13px;line-height:17px;color:#4a5468;left:215px;transform-origin:0 50%;transform:scaleX(0.8859);">Kod</span>
<span id="t35" class="t" style="top:161.5px;font-size:13px;line-height:17px;color:#4a5468;left:390px;transform-origin:0 50%;transform:scaleX(0.9771);">Domyśln...</span>
<span id="t36" class="t" style="top:161.5px;font-size:13px;line-height:17px;color:#4a5468;left:455.5px;transform-origin:0 50%;transform:scaleX(0.9351);">Opis</span>
<span id="t37" class="t" style="top:161.5px;font-size:13px;line-height:17px;color:#4a5468;left:559px;transform-origin:0 50%;transform:scaleX(0.9863);">Produkty defini...</span>
<span id="t38" class="t" style="top:161.5px;font-size:13px;line-height:17px;color:#4a5468;left:661.5px;transform-origin:0 50%;transform:scaleX(0.9261);">Rodziny</span>
<span id="t39" class="t" style="top:161.5px;font-size:13px;line-height:17px;color:#4a5468;left:764px;transform-origin:0 50%;transform:scaleX(0.9594);">Komplety</span>
<span id="t40" class="t" style="top:161.5px;font-size:13px;line-height:17px;color:#4a5468;left:866px;transform-origin:0 50%;transform:scaleX(0.9594);">Grupy ce...</span>
<div style="left:212.5px;top:160px;width:1px;height:19.5px;background:#eff1f6;"></div>
<div style="left:211.5px;top:160px;width:1px;height:19.5px;background:#cdd3e0;"></div>
<div style="left:388px;top:160px;width:1px;height:19.5px;background:#eff1f6;"></div>
<div style="left:387px;top:160px;width:1px;height:19.5px;background:#cdd3e0;"></div>
<div style="left:453.5px;top:160px;width:1px;height:19.5px;background:#eff1f6;"></div>
<div style="left:452.5px;top:160px;width:1px;height:19.5px;background:#cdd3e0;"></div>
<div style="left:557px;top:160px;width:1px;height:19.5px;background:#eff1f6;"></div>
<div style="left:556px;top:160px;width:1px;height:19.5px;background:#cdd3e0;"></div>
<div style="left:659.5px;top:160px;width:1px;height:19.5px;background:#eff1f6;"></div>
<div style="left:658.5px;top:160px;width:1px;height:19.5px;background:#cdd3e0;"></div>
<div style="left:762px;top:160px;width:1px;height:19.5px;background:#eff1f6;"></div>
<div style="left:761px;top:160px;width:1px;height:19.5px;background:#cdd3e0;"></div>
<div style="left:863.5px;top:160px;width:1px;height:19.5px;background:#eff1f6;"></div>
<div style="left:862.5px;top:160px;width:1px;height:19.5px;background:#cdd3e0;"></div>
<span id="t41" class="t" style="top:163.6px;font-size:8.5px;line-height:12.5px;color:#222;left:202.8px;font-family:"DejaVu Sans",sans-serif;">❋</span>
<svg style="left:746px;top:167px;" width="9.5" height="5.5" viewBox="0 0 9.5 5.5"><path d="M0 0h9.500l-4.750 5.500z" fill="#8c98b0"/></svg>
<div style="left:201px;top:180.5px;width:732px;height:20px;background:#edf6ed;"></div>
<div style="left:201px;top:181px;width:11.5px;height:22px;background:#e1e5ed;"></div>
<svg style="left:204.5px;top:187.5px;" width="4.6" height="7.4" viewBox="0 0 4.6 7.4"><circle cx="2.300" cy="2.300" r="2.200" fill="#1a1a1a"/><circle cx="2.300" cy="2" r=".8" fill="#e8ecf0"/><path d="M2.300 4v3.400" stroke="#1a1a1a" stroke-width="1.300"/></svg>
<span id="t42" class="t" style="top:182.7px;font-size:13px;line-height:17px;color:#6a7488;left:572.5px;transform:translateX(-50%) scaleX(1.0058);">kliknij aby dodać filtr</span>
<div style="left:212.5px;top:201px;width:720.5px;height:2px;background:#b0b8cf;"></div>
<div style="left:212.5px;top:203px;width:720.5px;height:20px;background:#fff4de;"></div>
<div style="left:201px;top:203px;width:11.5px;height:20px;background:#e1e5ed;border-bottom:1px solid #d3d9e4;"></div>
<span id="t43" class="t" style="top:205.1px;font-size:13px;line-height:17px;color:#1a1a1a;left:215.3px;transform-origin:0 50%;transform:scaleX(0.9331);">Okna</span>
<div style="left:212.5px;top:223px;width:720.5px;height:20px;background:#f6f7fb;"></div>
<div style="left:201px;top:223px;width:11.5px;height:20px;background:#e1e5ed;border-bottom:1px solid #d3d9e4;"></div>
<span id="t44" class="t" style="top:225.1px;font-size:13px;line-height:17px;color:#1a1a1a;left:215.3px;transform-origin:0 50%;transform:scaleX(0.9728);">Meble tapicerowane</span>
<div style="left:212.5px;top:243px;width:720.5px;height:20px;background:#edf6ed;"></div>
<div style="left:201px;top:243px;width:11.5px;height:20px;background:#e1e5ed;border-bottom:1px solid #d3d9e4;"></div>
<span id="t45" class="t" style="top:245.1px;font-size:13px;line-height:17px;color:#1a1a1a;left:215.3px;transform-origin:0 50%;transform:scaleX(0.9071);">Poszycia</span>
<div style="left:212.5px;top:263px;width:720.5px;height:20px;background:#f6f7fb;"></div>
<div style="left:201px;top:263px;width:11.5px;height:20px;background:#e1e5ed;border-bottom:1px solid #d3d9e4;"></div>
<span id="t46" class="t" style="top:265.1px;font-size:13px;line-height:17px;color:#1a1a1a;left:215.3px;transform-origin:0 50%;transform:scaleX(0.9560);">Opakowania</span>
<div style="left:212.5px;top:283px;width:720.5px;height:20px;background:#edf6ed;"></div>
<div style="left:201px;top:283px;width:11.5px;height:20px;background:#e1e5ed;border-bottom:1px solid #d3d9e4;"></div>
<span id="t47" class="t" style="top:285.1px;font-size:13px;line-height:17px;color:#1a1a1a;left:215.3px;transform-origin:0 50%;transform:scaleX(0.9672);">Samochody ratownicze</span>
<div style="left:212.5px;top:303px;width:720.5px;height:20px;background:#f6f7fb;"></div>
<div style="left:201px;top:303px;width:11.5px;height:20px;background:#e1e5ed;border-bottom:1px solid #d3d9e4;"></div>
<span id="t48" class="t" style="top:305.1px;font-size:13px;line-height:17px;color:#1a1a1a;left:215.3px;transform-origin:0 50%;transform:scaleX(0.9538);">Farby</span>
<div style="left:212.5px;top:323px;width:720.5px;height:20px;background:#edf6ed;"></div>
<div style="left:201px;top:323px;width:11.5px;height:20px;background:#e1e5ed;border-bottom:1px solid #d3d9e4;"></div>
<span id="t49" class="t" style="top:325.1px;font-size:13px;line-height:17px;color:#1a1a1a;left:215.3px;transform-origin:0 50%;transform:scaleX(0.9686);">Półprodukty</span>
<div style="left:212.5px;top:343px;width:720.5px;height:20px;background:#f6f7fb;"></div>
<div style="left:201px;top:343px;width:11.5px;height:20px;background:#e1e5ed;border-bottom:1px solid #d3d9e4;"></div>
<span id="t50" class="t" style="top:345.1px;font-size:13px;line-height:17px;color:#1a1a1a;left:215.3px;transform-origin:0 50%;transform:scaleX(0.9866);">Meble twarde</span>
<div style="left:212.5px;top:363px;width:720.5px;height:7px;background:#edf6ed;"></div>
<div style="left:201px;top:363px;width:11.5px;height:7px;background:#e1e5ed;border-bottom:1px solid #d3d9e4;"></div>
<div style="left:212.5px;top:363px;width:300px;height:7px;overflow:hidden;"><span id="t51" class="t" style="top:2.1px;font-size:13px;line-height:17px;color:#1a1a1a;left:2.8px;transform-origin:0 50%;transform:scaleX(0.9225);">Palety drewniane</span></div>
<svg style="left:205px;top:209.3px;" width="4" height="7.4" viewBox="0 0 4 7.4"><path d="M0 0l4 3.700-4 3.700z" fill="#111"/></svg>
<span id="t52" class="t" style="top:204.5px;font-size:13px;line-height:17px;color:#1a1a1a;left:455.5px;transform-origin:0 50%;transform:scaleX(0.9905);">Okna definiowa...</span>
<span id="t53" class="t" style="top:204.5px;font-size:13px;line-height:17px;color:#1a1a1a;right:303.2px;transform-origin:100% 50%;transform:scaleX(1.0230);">Tak</span>
<span id="t54" class="t" style="top:204.5px;font-size:13px;line-height:17px;color:#1a1a1a;left:661.5px;transform-origin:0 50%;transform:scaleX(0.9223);">Nie</span>
<span id="t55" class="t" style="top:204.5px;font-size:13px;line-height:17px;color:#1a1a1a;left:764px;transform-origin:0 50%;transform:scaleX(0.9223);">Nie</span>
<span id="t56" class="t" style="top:204.5px;font-size:13px;line-height:17px;color:#1a1a1a;left:866.7px;transform-origin:0 50%;transform:scaleX(0.9223);">Nie</span>
<div style="left:201px;top:370px;width:732px;height:35.5px;background:linear-gradient(#e6e9f0,#d8dde8);border-top:1px solid #b4bdce;"></div>
<div style="left:215.5px;top:373px;width:330px;height:29px;background:#fff;border:1px solid #cfd5e1;border-radius:2px;"></div>
<span id="t57" class="t" style="top:380.2px;font-size:13px;line-height:17px;color:#1a1a1a;left:226px;transform-origin:0 50%;transform:scaleX(0.9773);">37 pozycji</span>
<div style="left:933px;top:121px;width:18px;height:284.5px;background:#e6e9f0;border-left:1px solid #cdd4e1;"></div>
<svg style="left:938.3px;top:127.3px;" width="6.6" height="4" viewBox="0 0 6.6 4"><path d="M0 4h6.600l-3.300-4z" fill="#8c98b0"/></svg>
<svg style="left:938.3px;top:395.5px;" width="6.6" height="4" viewBox="0 0 6.6 4"><path d="M0 0h6.600l-3.300 4z" fill="#8c98b0"/></svg>
<div style="left:934.5px;top:281.5px;width:14px;height:53px;background:linear-gradient(90deg,#d6dce9,#eef0f5 45%,#d3d9e6);border:1px solid #a3adc2;border-radius:2px;"></div>
<div style="left:938.5px;top:303.5px;width:6.5px;height:1.2px;background:#6a7488;"></div>
<div style="left:938.5px;top:306px;width:6.5px;height:1.2px;background:#6a7488;"></div>
<div style="left:938.5px;top:308.5px;width:6.5px;height:1.2px;background:#6a7488;"></div>
<div style="left:938.5px;top:311px;width:6.5px;height:1.2px;background:#6a7488;"></div>
<div style="left:201.5px;top:456px;width:748px;height:113px;background:#bcc7da;border:1px solid #a3aec3;border-top:4px solid #fbe29c;border-bottom:4px solid #fbe29c;border-radius:0 5px 4px 4px;"></div>
<div style="left:204px;top:429.5px;width:93px;height:29px;background:linear-gradient(#fdf9ec,#fdf3d8 56%,#fbe6a6 64%,#fbe29c);border:1px solid #e9d6a0;border-bottom:none;border-radius:4px 4px 0 0;"></div>
<svg style="left:214px;top:435px;" width="15" height="15" viewBox="0 0 16 16"><circle cx="8" cy="8" r="7.400" fill="#f4f6fa" stroke="#8a96ac" stroke-width="1"/><path d="M3 11a5.500 5.500 0 0 1 1.500-7" fill="none" stroke="#3d86d8" stroke-width="2"/><path d="M5.500 3.200a5.500 5.500 0 0 1 5 0" fill="none" stroke="#8fc0f0" stroke-width="2"/><path d="M11.500 4a5.500 5.500 0 0 1 1.500 7" fill="none" stroke="#d8442c" stroke-width="2"/><path d="M7.800 9l3-4" stroke="#222" stroke-width="1.300"/><circle cx="7.800" cy="9" r="1.300" fill="#222"/></svg>
<span id="t58" class="t" style="top:436.5px;font-size:11px;line-height:15px;color:#1f2750;left:236.2px;transform-origin:0 50%;transform:scaleX(0.9503);">Technologie</span>
<div style="left:569px;top:572px;width:1.5px;height:1.5px;background:#7a859c;"></div>
<div style="left:572px;top:572px;width:1.5px;height:1.5px;background:#7a859c;"></div>
<div style="left:575px;top:572px;width:1.5px;height:1.5px;background:#7a859c;"></div>
<div style="left:578px;top:572px;width:1.5px;height:1.5px;background:#7a859c;"></div>
<div style="left:581px;top:572px;width:1.5px;height:1.5px;background:#7a859c;"></div>
<svg style="left:211px;top:467px;" width="16.5" height="16.5" viewBox="0 0 16 16"><path d="M5.500 .7h5v4.800h4.800v5h-4.800v4.800h-5v-4.800h-4.800v-5h4.800z" fill="#3f8ae8" stroke="#1d56b0" stroke-width="1.200" stroke-linejoin="round"/><path d="M6.500 2h3v4.500h4.500M2 7.500h4.500" fill="none" stroke="#9cc8fa" stroke-width="1.200"/></svg>
<svg style="left:210.5px;top:494.5px;" width="16" height="16" viewBox="0 0 16 16"><path d="M5.200 .6h6.200a.6.6 0 0 1 .6.6v13.600a.6.6 0 0 1-.6.6h-10a.6.6 0 0 1-.6-.6v-9.600z" fill="#fcfcfd" stroke="#c9ced8" stroke-width=".6"/><path d="M5.200 .6v3.600a1 1 0 0 1-1 1h-3.400z" fill="#e4e7ed" stroke="#c0c5d0" stroke-width=".5"/><path d="M6.800 10l6.200-5" stroke="#1a80ea" stroke-width="4.300"/><path d="M13 5l1.300-1.050" stroke="#4a4a4e" stroke-width="4.300"/><path d="M5.500 8.300l2.700 3.400-4.100 1.700z" fill="#55575c"/></svg>
<svg style="left:212.5px;top:524.5px;" width="13" height="12.5" viewBox="0 0 14.500 13.500"><path d="M3 2.800l8.500 8M11.500 2.800l-8.500 8" stroke="#3f8fd6" stroke-width="5" stroke-linecap="round"/><path d="M3 2.800l8.500 8M11.500 2.800l-8.500 8" stroke="#55a4e6" stroke-width="3" stroke-linecap="round"/></svg>
<div style="left:206px;top:552px;width:24px;height:12px;overflow:hidden;"><svg style="left:1.5px;top:2.5px;" width="13" height="14" viewBox="0 0 13 14"><path d="M.5 .5h2.500M1.700 .5v10" stroke="#1c2a5a" stroke-width="1.100" fill="none"/><rect x="4" y="1" width="8.500" height="10" fill="#f4f7fc" stroke="#8a9ac0" stroke-width="1"/></svg></div>
<svg style="left:925px;top:468px;" width="15.5" height="14.5" viewBox="0 0 15.5 14.5"><circle cx="2.200" cy="2.200" r="1.600" fill="#b4d6f6" stroke="#2a6ad0" stroke-width=".9"/><circle cx="2.200" cy="7.200" r="1.600" fill="#b4d6f6" stroke="#2a6ad0" stroke-width=".9"/><circle cx="2.200" cy="12.200" r="1.600" fill="#b4d6f6" stroke="#2a6ad0" stroke-width=".9"/><path d="M5.500 2.200h10M5.500 7.200h10M5.500 12.200h10" stroke="#eef2f8" stroke-width="2.600" stroke-linecap="round"/><path d="M6 2.200h9M6 7.200h9M6 12.200h9" stroke="#2a2a34" stroke-width="1.250"/></svg>
<div style="left:235px;top:460px;width:681.5px;height:104.5px;background:#fff;"></div>
<div style="left:235px;top:460px;width:681.5px;height:22.5px;background:linear-gradient(#e9ecf2,#d9dee8);"></div>
<span id="t59" class="t" style="top:465.8px;font-size:8.5px;line-height:12.5px;color:#222;left:236.8px;font-family:"DejaVu Sans",sans-serif;">❋</span>
<span id="t60" class="t" style="top:463.5px;font-size:13px;line-height:17px;color:#4a5468;left:249.3px;transform-origin:0 50%;transform:scaleX(0.8859);">Kod</span>
<span id="t61" class="t" style="top:463.5px;font-size:13px;line-height:17px;color:#4a5468;left:450px;transform-origin:0 50%;transform:scaleX(0.9826);">Grupa produktów</span>
<span id="t62" class="t" style="top:463.5px;font-size:13px;line-height:17px;color:#4a5468;left:650px;transform-origin:0 50%;transform:scaleX(0.9686);">Nazwa</span>
<div style="left:246.5px;top:462px;width:1px;height:20px;background:#eff1f6;"></div>
<div style="left:245.5px;top:462px;width:1px;height:20px;background:#cdd3e0;"></div>
<div style="left:448px;top:462px;width:1px;height:20px;background:#eff1f6;"></div>
<div style="left:447px;top:462px;width:1px;height:20px;background:#cdd3e0;"></div>
<div style="left:648px;top:462px;width:1px;height:20px;background:#eff1f6;"></div>
<div style="left:647px;top:462px;width:1px;height:20px;background:#cdd3e0;"></div>
<svg style="left:432.5px;top:469.5px;" width="9" height="5" viewBox="0 0 9 5"><path d="M0 5h9l-4.500-5z" fill="#8c98b0"/></svg>
<div style="left:235px;top:482.5px;width:681.5px;height:20.5px;background:#edf6ed;"></div>
<div style="left:235px;top:482.5px;width:11.5px;height:22px;background:#e1e5ed;"></div>
<svg style="left:238.5px;top:490px;" width="4.6" height="7.4" viewBox="0 0 4.6 7.4"><circle cx="2.300" cy="2.300" r="2.200" fill="#1a1a1a"/><circle cx="2.300" cy="2" r=".8" fill="#e8ecf0"/><path d="M2.300 4v3.400" stroke="#1a1a1a" stroke-width="1.300"/></svg>
<span id="t63" class="t" style="top:485.2px;font-size:13px;line-height:17px;color:#6a7488;left:581.5px;transform:translateX(-50%) scaleX(1.0058);">kliknij aby dodać filtr</span>
<div style="left:246.5px;top:503px;width:670px;height:2px;background:#b0b8cf;"></div>
<div style="left:246.5px;top:505px;width:670px;height:20px;background:#f5f6fa;"></div>
<div style="left:246.5px;top:525px;width:670px;height:20px;background:#fff4de;"></div>
<div style="left:235px;top:504.5px;width:11.5px;height:20.5px;background:#e1e5ed;border-bottom:1px solid #d3d9e4;"></div>
<div style="left:235px;top:525px;width:11.5px;height:20px;background:#e1e5ed;border-bottom:1px solid #d3d9e4;"></div>
<svg style="left:239px;top:531.3px;" width="4" height="7.4" viewBox="0 0 4 7.4"><path d="M0 0l4 3.700-4 3.700z" fill="#111"/></svg>
<span id="t64" class="t" style="top:507.0px;font-size:13px;line-height:17px;color:#1a1a1a;left:249.3px;transform-origin:0 50%;transform:scaleX(0.9823);">Okna drewniane</span>
<span id="t65" class="t" style="top:507.0px;font-size:13px;line-height:17px;color:#1a1a1a;left:450px;transform-origin:0 50%;transform:scaleX(0.9331);">Okna</span>
<span id="t66" class="t" style="top:507.0px;font-size:13px;line-height:17px;color:#1a1a1a;left:650px;transform-origin:0 50%;transform:scaleX(0.9823);">Okna drewniane</span>
<span id="t67" class="t" style="top:527.0px;font-size:13px;line-height:17px;color:#1a1a1a;left:249.3px;transform-origin:0 50%;transform:scaleX(0.9117);">Okna PCV</span>
<span id="t68" class="t" style="top:527.0px;font-size:13px;line-height:17px;color:#1a1a1a;left:450px;transform-origin:0 50%;transform:scaleX(0.9331);">Okna</span>
<span id="t69" class="t" style="top:527.0px;font-size:13px;line-height:17px;color:#1a1a1a;left:650px;transform-origin:0 50%;transform:scaleX(0.9117);">Okna PCV</span>
<div style="left:2px;top:582px;width:956px;height:22.5px;background:#e6e9f0;"></div>
<div style="left:8px;top:583px;width:266px;height:14.5px;background:linear-gradient(#e4e7ee,#dce0e9);"></div>
<div style="left:276px;top:583px;width:266px;height:14.5px;background:linear-gradient(#e4e7ee,#dce0e9);"></div>
<div style="left:544px;top:583px;width:264px;height:14.5px;background:linear-gradient(#e4e7ee,#dce0e9);"></div>
<div style="left:810px;top:583px;width:140px;height:14.5px;background:linear-gradient(#e4e7ee,#dce0e9);"></div>
<span id="t70" class="t" style="top:583.1px;font-size:11px;line-height:15px;color:#4a5468;left:12.5px;transform-origin:0 50%;transform:scaleX(0.9953);">Copyright © 2005-2024 RHO Software</span>
<span id="t71" class="t" style="top:583.1px;font-size:11px;line-height:15px;color:#4a5468;left:280px;transform-origin:0 50%;transform:scaleX(1.0103);">Modus demo v.5.0.0.519</span>
<span id="t72" class="t" style="top:583.1px;font-size:11px;line-height:15px;color:#4a5468;left:548px;transform-origin:0 50%;transform:scaleX(1.0547);">Nr licencji: 2223/111111111111111</span>
<span id="t73" class="t" style="top:583.1px;font-size:11px;line-height:15px;color:#4a5468;right:13.5px;transform-origin:100% 50%;transform:scaleX(1.0144);white-space:pre;">2024-11-29,  15:43:55</span>
<div style="left:296px;top:226px;width:616px;height:238px;background:#2b3246;"></div>
<div style="left:296px;top:226px;width:615px;height:237px;background:linear-gradient(#a7b3ca,#bcc6d9 30px,#c5cddd 34px,#c5cddd);border:1px solid #2b3246;box-shadow:inset 1px 1px 0 #d9dfea;"></div>
<div style="left:298px;top:256px;width:6px;height:206px;background:linear-gradient(90deg,#cdd4e3,#b9c4d7);"></div>
<div style="left:304px;top:256px;width:600.5px;height:200px;background:#bac5d8;"></div>
<span id="t74" class="t" style="top:235.0px;font-size:12px;line-height:16px;color:#1a1a3a;left:310.5px;transform-origin:0 50%;transform:scaleX(0.9290);">MODUS</span>
<div style="left:306px;top:258px;width:597px;height:23px;background:#ffff00;"></div>
<span id="t75" class="t" style="top:260.0px;font-size:15px;line-height:19px;color:#1a1a3a;left:603.5px;transform:translateX(-50%) scaleX(0.9972);">· OSTRZEŻENIE ·</span>
<svg style="left:314px;top:319.5px;" width="64" height="60" viewBox="0 0 64 60">
<path d="M31.600 6.800L56.700 53.200H6.500z" fill="#46557a" stroke="#46557a" stroke-width="13" stroke-linejoin="round"/>
<path d="M31.600 6.800L56.700 53.200H6.500z" fill="#fdb92e" stroke="#fdb92e" stroke-width="5.800" stroke-linejoin="round"/>
<svg x="0" y="0" width="31.500" height="60" viewBox="0 0 31.500 60" style="overflow:hidden;position:static;"><path d="M31.600 6.800L56.700 53.200H6.500z" fill="#ffdc32" stroke="#ffdc32" stroke-width="5.800" stroke-linejoin="round"/></svg>
<rect x="28" y="15.600" width="7" height="25.600" rx="3.500" fill="#46557a"/><circle cx="31.500" cy="47.800" r="3.600" fill="#46557a"/></svg>
<span id="t76" class="t" style="top:337.1px;font-size:11px;line-height:15px;color:#1a1a44;left:392.5px;transform-origin:0 50%;transform:scaleX(0.9866);">Wyłączenie kontroli zgodności partii jest funkcją nieodwracalną. Czy na pewno wyłączyć kontrolę</span>
<span id="t77" class="t" style="top:350.1px;font-size:11px;line-height:15px;color:#1a1a44;left:392.5px;transform-origin:0 50%;transform:scaleX(0.9715);">zgodności partii dla wskazanej grupy?</span>
<div style="left:700px;top:418.5px;width:99px;height:29px;background:#e4dbb8;border-radius:3px;border:1px solid #cfc6a4;"></div>
<div style="left:701.5px;top:420px;width:96px;height:26px;background:linear-gradient(#f0f2f6,#dfe3eb 45%,#c6ccd9);border:1px solid #5a6274;border-radius:2px;box-shadow:inset 0 0 0 1px #f6f7fa;"></div>
<div style="left:704px;top:422.5px;width:91px;height:21px;border:1px dotted #222;"></div>
<svg style="left:730px;top:426.5px;" width="14" height="14" viewBox="0 0 14 14"><circle cx="7" cy="7" r="6.600" fill="#35b24a" stroke="#1f8a32" stroke-width=".8"/><path d="M3.800 7.200l2.300 2.400 4.200-4.600" fill="none" stroke="#fff" stroke-width="1.700"/></svg>
<span id="t78" class="t" style="top:425.0px;font-size:13px;line-height:17px;color:#1c2233;left:749px;transform-origin:0 50%;transform:scaleX(0.9637);">Tak</span>
<svg style="left:831.5px;top:426.5px;" width="14" height="14" viewBox="0 0 14 14"><circle cx="7" cy="7" r="6.900" fill="#f2463e"/><path d="M4.500 4.500l5 5M9.500 4.500l-5 5" stroke="#fff" stroke-width="1.800"/></svg>
<span id="t79" class="t" style="top:425.0px;font-size:13px;line-height:17px;color:#1c2233;left:850px;transform-origin:0 50%;transform:scaleX(0.8455);">Nie</span>
<div style="left:25px;top:194.5px;width:164px;height:27.5px;border:2.500px solid #ec1218;border-radius:6px;box-shadow:0 0 1.500px rgba(220,0,0,.6), inset 0 0 1.500px rgba(220,0,0,.4);"></div>
<div style="left:145.9px;top:181.4px;width:29.2px;height:29.2px;border-radius:50%;opacity:.94;border:1.500px solid #ea1a22;background:radial-gradient(circle at 42% 40%,#e03034 0,#d62228 60%,#cc1c22 100%);box-shadow:0 1.500px 3px rgba(80,0,0,.4);"><span class="t" style="left:0;width:26.2px;text-align:center;top:3.1px;line-height:20px;color:#fff;font-size:14.500px;-webkit-text-stroke:.35px #fff;">1</span></div>
<div style="left:211.5px;top:200px;width:720px;height:23.3px;border:2.500px solid #ec1218;border-radius:6px;box-shadow:0 0 1.500px rgba(220,0,0,.6), inset 0 0 1.500px rgba(220,0,0,.4);"></div>
<div style="left:239.4px;top:186.9px;width:29.2px;height:29.2px;border-radius:50%;opacity:.94;border:1.500px solid #ea1a22;background:radial-gradient(circle at 42% 40%,#e03034 0,#d62228 60%,#cc1c22 100%);box-shadow:0 1.500px 3px rgba(80,0,0,.4);"><span class="t" style="left:0;width:26.2px;text-align:center;top:3.1px;line-height:20px;color:#fff;font-size:14.500px;-webkit-text-stroke:.35px #fff;">2</span></div>
<div style="left:385px;top:82.5px;width:85px;height:39.5px;border:2.500px solid #ec1218;border-radius:6px;box-shadow:0 0 1.500px rgba(220,0,0,.6), inset 0 0 1.500px rgba(220,0,0,.4);"></div>
<div style="left:454.9px;top:82.9px;width:29.2px;height:29.2px;border-radius:50%;opacity:.94;border:1.500px solid #ea1a22;background:radial-gradient(circle at 42% 40%,#e03034 0,#d62228 60%,#cc1c22 100%);box-shadow:0 1.500px 3px rgba(80,0,0,.4);"><span class="t" style="left:0;width:26.2px;text-align:center;top:3.1px;line-height:20px;color:#fff;font-size:14.500px;-webkit-text-stroke:.35px #fff;">3</span></div>
<div style="left:695.5px;top:413.5px;width:106px;height:39px;border:2.500px solid #ec1218;border-radius:6px;box-shadow:0 0 1.500px rgba(220,0,0,.6), inset 0 0 1.500px rgba(220,0,0,.4);"></div>
<div style="left:731.7px;top:385.8px;width:30px;height:30px;border-radius:50%;opacity:.94;border:1.500px solid #ea1a22;background:radial-gradient(circle at 42% 40%,#e03034 0,#d62228 60%,#cc1c22 100%);box-shadow:0 1.500px 3px rgba(80,0,0,.4);"><span class="t" style="left:0;width:27px;text-align:center;top:3.5px;line-height:20px;color:#fff;font-family:'Liberation Serif',serif;font-weight:bold;font-size:16px;">4</span></div>
</body></html>
